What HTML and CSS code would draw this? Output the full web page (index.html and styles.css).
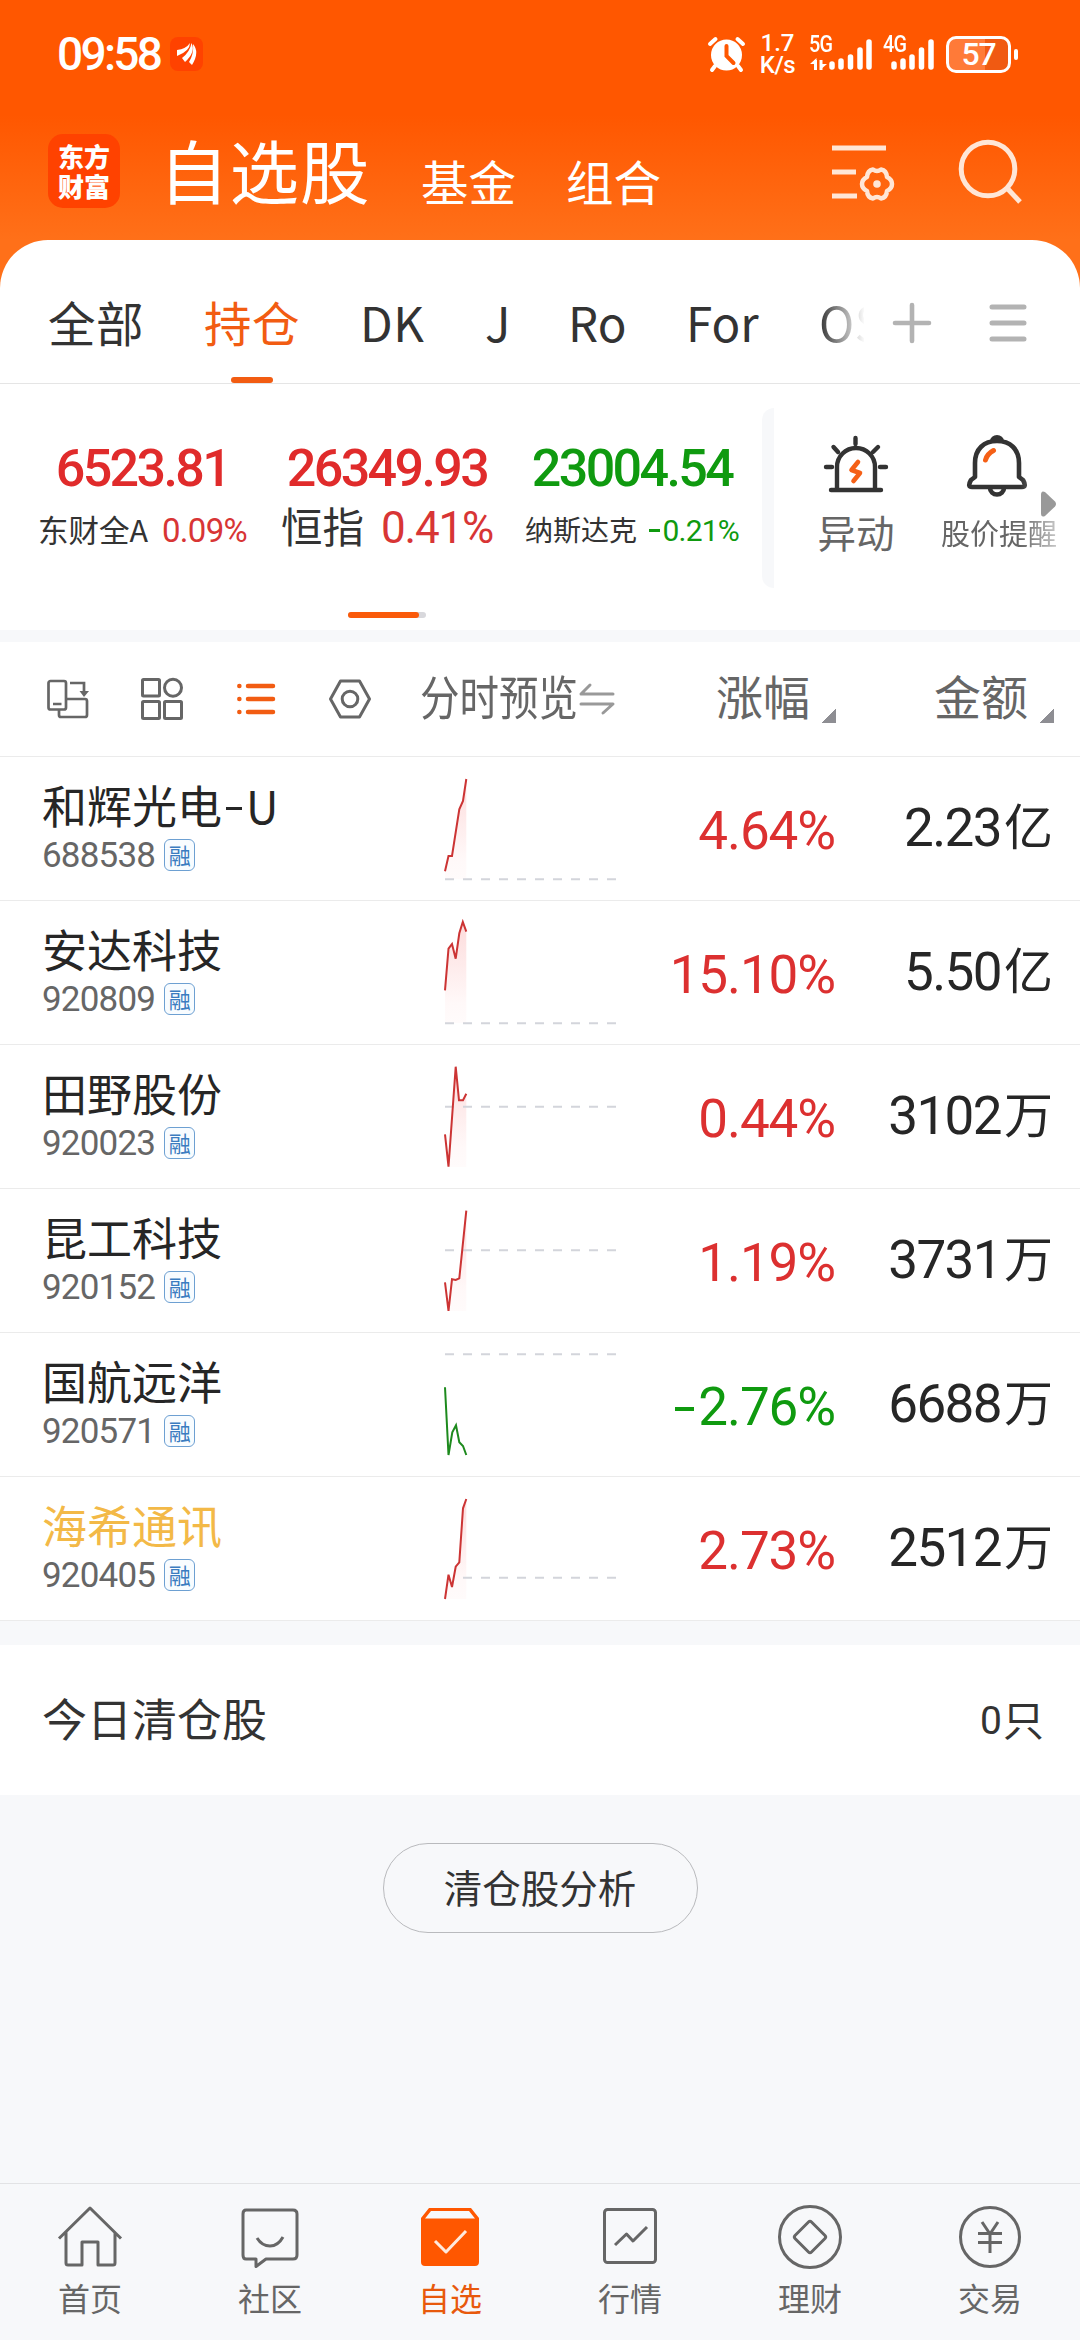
FILE: index.html
```html
<!DOCTYPE html>
<html lang="zh-CN">
<head>
<meta charset="utf-8">
<title>自选股</title>
<link rel="stylesheet" href="styles.css">
</head>
<body>
<div class="app">
  <header class="top">
    <div class="status">
      <span class="time">09:58</span>
      <svg class="notice" width="33" height="34" viewBox="0 0 33 34"><rect width="33" height="34" rx="8" fill="#ff4200"/><g fill="#fff"><path d="M7 13Q16 12 20 6Q20 14 7 19Z"/><path d="M12 21Q20 15 21.500 6Q26 15 15 25Z"/><path d="M19 25Q24 17 23 7Q30 15 22 28Z"/></g></svg>
      <svg class="alarm" width="37" height="37" viewBox="0 0 37 37"><circle cx="18.500" cy="19" r="15.500" fill="#fff"/><path d="M2 8L7.500 3M35 8L29.500 3M7 30L4 34M30 30L33 34" stroke="#fff" stroke-width="4" stroke-linecap="round"/><path d="M18.500 10V20L25.500 27" fill="none" stroke="#ff5700" stroke-width="4" stroke-linecap="round"/></svg>
      <div class="speed"><span>1.7</span><span>K/s</span></div>
      <div class="signal sig5"><span>5G</span>
        <svg width="65" height="36" viewBox="0 0 65 36"><path d="M22 31V28M31 31V25M40.500 31V21M50 31V14M59 31V6" stroke="#fff" stroke-width="5.500" stroke-linecap="round"/><path d="M5.500 34V24M11 24V34" stroke="#fff" stroke-width="3"/><path d="M0 28L6.500 22V28ZM10 34L17 28H10Z" fill="#fff"/></svg>
      </div>
      <div class="signal sig4"><span>4G</span>
        <svg width="52" height="36" viewBox="0 0 52 36"><path d="M10 31V28M19 31V25M28 31V21M37.500 31V14M47 31V6" stroke="#fff" stroke-width="5.500" stroke-linecap="round"/></svg>
      </div>
      <div class="battery"><span>57</span></div>
      <i class="nub"></i>
    </div>
    <div class="titlebar">
      <div class="logo"><span>东方</span><span>财富</span></div>
      <h1>自选股</h1>
      <span class="subtitle">基金</span>
      <span class="subtitle">组合</span>
      <svg class="listset" width="64" height="60" viewBox="0 0 64 60" fill="none" stroke="#ffe6d6"><path d="M0 5H54M0 29H24M0 53H25" stroke-width="5"/><path d="M41 26.500Q45 29.500 49 26.500Q54.500 27.500 55 34Q60 36.500 60 41Q60 45.500 55 48Q54.500 54.500 49 55.500Q45 52.500 41 55.500Q35.500 54.500 35 48Q30 45.500 30 41Q30 36.500 35 34Q35.500 27.500 41 26.500Z" stroke-width="4.500" stroke-linejoin="round"/><circle cx="45" cy="41" r="3.800" fill="#ffe6d6" stroke="none"/></svg>
      <svg class="search" width="64" height="66" viewBox="0 0 64 66" fill="none" stroke="#ffe6d6" stroke-width="5"><circle cx="29" cy="30" r="26.800"/><path d="M48 49L61 63"/></svg>
    </div>
  </header>

  <main class="sheet">
    <nav class="tabs">
      <span class="tab">全部</span>
      <span class="tab active">持仓</span>
      <span class="tab dk">DK</span>
      <span class="tab j">J</span>
      <span class="tab ro">Ro</span>
      <span class="tab for">For</span>
      <span class="tab faded">OS</span>
      <svg class="plus" width="40" height="42" viewBox="0 0 40 42"><path d="M3 21H37M20 3V39" stroke="#b3b3b3" stroke-width="4.600" stroke-linecap="round"/></svg>
      <svg class="menu" width="38" height="42" viewBox="0 0 38 42"><path d="M3 5H35M3 21H35M3 37H35" stroke="#b3b3b3" stroke-width="5" stroke-linecap="round"/></svg>
    </nav>

    <section class="indices">
      <div class="index i1"><b>6523.81</b><div class="sub"><span class="n">东财全A</span><span class="p">0.09%</span></div></div>
      <div class="index i2"><b>26349.93</b><div class="sub"><span class="n">恒指</span><span class="p">0.41%</span></div></div>
      <div class="index i3 down"><b>23004.54</b><div class="sub"><span class="n">纳斯达克</span><span class="p"><i class="minus"></i>0.21%</span></div></div>
      <i class="edge"></i>
      <div class="tool t1">
        <svg width="64" height="58" viewBox="0 0 64 58" fill="none" stroke="#333" stroke-width="4.400" stroke-linecap="round"><path d="M7 55H57M13 54V32A19 19 0 0 1 51 32V54M31.500 3V9M9.500 12L14 17M54 12L49 17M2 32H8M56 32H62"/><path d="M34 27L27.500 35L36 38L29.500 46" stroke="#f56016" stroke-width="4.600" stroke-linejoin="round"/></svg>
        <span>异动</span>
      </div>
      <div class="tool t2">
        <svg width="60" height="62" viewBox="0 0 60 62" fill="none" stroke="#333" stroke-width="4.600" stroke-linecap="round" stroke-linejoin="round"><path d="M8 42V28C8 14 17 6 30 6C43 6 52 14 52 28V42L56 45Q60 52 55 52H5Q0 52 4 45Z"/><path d="M24 6A6 5 0 0 1 36 6Z" fill="#333" stroke-width="2"/><path d="M23 53A7 6.500 0 0 0 37 53"/><path d="M18.500 25Q20 19 26.500 15.500" stroke="#f56016" stroke-width="5"/></svg>
        <span>股价提醒</span>
      </div>
      <svg class="more" width="15" height="26" viewBox="0 0 15 26"><path d="M0 4Q0-1 4 1L14 10.500Q16 13 14 15.500L4 25Q0 27 0 22Z" fill="#999"/></svg>
      <div class="pager"><i></i></div>
    </section>

    <div class="thead">
      <svg class="h1i" width="42" height="40" viewBox="0 0 42 40" fill="none" stroke="#666" stroke-width="2.700"><rect x="1.500" y="2" width="17.500" height="28.500" rx="2"/><path d="M6 25H14.500M23 4H37V15M19 20H38Q40 20 40 22V36Q40 38 38 38H14Q12 38 12 36V31"/><path d="M32.500 12H42L37 18Z" fill="#666" stroke="none"/></svg>
      <svg class="h2i" width="42" height="42" viewBox="0 0 42 42" fill="none" stroke="#666" stroke-width="3"><rect x="1.500" y="1.500" width="17" height="16.500" rx="1"/><ellipse cx="32" cy="9.800" rx="8.500" ry="8.500"/><rect x="1.500" y="23.500" width="17" height="17" rx="1"/><rect x="23.500" y="23.500" width="17" height="17" rx="1"/></svg>
      <svg class="h3i" width="38" height="32" viewBox="0 0 38 32" stroke="#f25c12" stroke-width="4.500" stroke-linecap="round"><path d="M11 3H36M11 16H36M11 29H36M2.300 3H2.400M2.300 16H2.400M2.300 29H2.400"/></svg>
      <svg class="h4i" width="42" height="40" viewBox="0 0 42 40" fill="none" stroke="#666" stroke-width="3" stroke-linejoin="round"><path d="M11.500 2H30.500L40.500 20L30.500 38H11.500L1.500 20Z"/><circle cx="21" cy="20" r="7.800"/></svg>
      <span class="preview">分时预览</span>
      <svg class="swap" width="36" height="32" viewBox="0 0 36 32" fill="none" stroke="#999" stroke-width="3" stroke-linecap="round" stroke-linejoin="round"><path d="M34 11H2L11 2M2 21H34L24 30"/></svg>
      <span class="col c1">涨幅<i></i></span>
      <span class="col c2">金额<i></i></span>
    </div>

    <div class="rows">
      <div class="row">
        <div class="stock"><span class="name">和辉光电<em></em>U</span><div class="code">688538<span class="tag">融</span></div></div>
        <svg class="chart" width="175" height="143" viewBox="0 0 175 143"><defs><linearGradient id="fade" x1="0" y1="20" x2="0" y2="122" gradientUnits="userSpaceOnUse"><stop offset="0" stop-color="#fcd2d2"/><stop offset=".8" stop-color="#fff7f7"/><stop offset="1" stop-color="#fffafa"/></linearGradient></defs><path class="area" d="M0 114.300L3.500 99H7L14.300 52.300L18 44L21.300 22V122H0Z"/><path class="base" d="M0 122.300H172"/><path class="line" d="M0 114.300L3.500 99H7L14.300 52.300L18 44L21.300 22"/></svg>
        <span class="pct">4.64%</span><span class="amt">2.23<em>亿</em></span>
      </div>
      <div class="row">
        <div class="stock"><span class="name">安达科技</span><div class="code">920809<span class="tag">融</span></div></div>
        <svg class="chart" width="175" height="143" viewBox="0 0 175 143"><path class="area" d="M0 89.300L3.500 47.700L7 43L10.700 57.700L14.300 32.300L17.800 21L21.300 30.700V122H0Z"/><path class="base" d="M0 122.300H172"/><path class="line" d="M0 89.300L3.500 47.700L7 43L10.700 57.700L14.300 32.300L17.800 21L21.300 30.700"/></svg>
        <span class="pct">15.10%</span><span class="amt">5.50<em>亿</em></span>
      </div>
      <div class="row">
        <div class="stock"><span class="name">田野股份</span><div class="code">920023<span class="tag">融</span></div></div>
        <svg class="chart" width="175" height="143" viewBox="0 0 175 143"><path class="area" d="M0 89.300L3.500 121.700L10.700 21.700L14 55.300H18L21.300 48.700V122H3Z"/><path class="base" d="M0 61.700H172"/><path class="line" d="M0 89.300L3.500 121.700L10.700 21.700L14 55.300H18L21.300 48.700"/></svg>
        <span class="pct">0.44%</span><span class="amt">3102<em>万</em></span>
      </div>
      <div class="row">
        <div class="stock"><span class="name">昆工科技</span><div class="code">920152<span class="tag">融</span></div></div>
        <svg class="chart" width="175" height="143" viewBox="0 0 175 143"><path class="area" d="M0 93.300L3.500 122L7 90.300L10.700 91L14.300 89.300L21.300 21.700V122H3Z"/><path class="base" d="M0 61.300H172"/><path class="line" d="M0 93.300L3.500 122L7 90.300L10.700 91L14.300 89.300L21.300 21.700"/></svg>
        <span class="pct">1.19%</span><span class="amt">3731<em>万</em></span>
      </div>
      <div class="row down">
        <div class="stock"><span class="name">国航远洋</span><div class="code">920571<span class="tag">融</span></div></div>
        <svg class="chart" width="175" height="143" viewBox="0 0 175 143"><path class="base" d="M0 21.300H172"/><path class="line" d="M0 54.300L3.500 122L7.300 99.300L11 92.300L14.300 109.300L18 113L21.300 122"/></svg>
        <span class="pct"><i class="minus"></i>2.76%</span><span class="amt">6688<em>万</em></span>
      </div>
      <div class="row marked">
        <div class="stock"><span class="name">海希通讯</span><div class="code">920405<span class="tag">融</span></div></div>
        <svg class="chart" width="175" height="143" viewBox="0 0 175 143"><path class="area" d="M0 122L3.500 97.700L7 110L10.700 89.700L14.300 85.300L18 31.300L21.300 22V122Z"/><path class="base" d="M18 100.700H172"/><path class="line" d="M0 122L3.500 97.700L7 110L10.700 89.700L14.300 85.300L18 31.300L21.300 22"/></svg>
        <span class="pct">2.73%</span><span class="amt">2512<em>万</em></span>
      </div>
    </div>

    <div class="cleared"><span>今日清仓股</span><span class="count">0<em>只</em></span></div>
    <div class="rest"><button class="analyse">清仓股分析</button></div>
  </main>

  <footer class="dock">
    <div class="item"><svg width="66" height="66" viewBox="0 0 66 66"><path d="M2 34.500L33 4L64 34.500M9 28V59Q9 61 11 61H25V38H41V61H56Q58 61 58 59V28"/></svg><span>首页</span></div>
    <div class="item"><svg width="66" height="66" viewBox="0 0 66 66"><path d="M9 6H56Q60 6 60 10V51Q60 55 56 55H29L19 62.500V55H9Q6 55 6 51V10Q6 6 9 6Z"/><path d="M20 34Q25 42 33 42Q41 42 46 33"/></svg><span>社区</span></div>
    <div class="item on"><svg width="66" height="66" viewBox="0 0 66 66"><path class="fill" fill-rule="evenodd" d="M12 4H54L62 14V58Q62 62 58 62H8Q4 62 4 58V14ZM14 7L8 14.500H58L52 7Z"/><path class="tick" d="M18 37L29 48L49 27"/></svg><span>自选</span></div>
    <div class="item"><svg width="66" height="66" viewBox="0 0 66 66"><rect x="7.500" y="5.500" width="51" height="53" rx="3"/><path d="M18 41L29.500 30L36 37L50 23"/></svg><span>行情</span></div>
    <div class="item"><svg width="66" height="66" viewBox="0 0 66 66"><circle cx="33" cy="33" r="30.500"/><path d="M31.500 18Q33 16.500 34.500 18L48 31.500Q49.500 33 48 34.500L34.500 48Q33 49.500 31.500 48L18 34.500Q16.500 33 18 31.500Z"/></svg><span>理财</span></div>
    <div class="item"><svg width="66" height="66" viewBox="0 0 66 66"><circle cx="33" cy="33" r="29.500"/><path d="M25 18L33 30L41 18M21 29.500H45M21 38.500H45M33 30V49"/></svg><span>交易</span></div>
  </footer>
</div>
</body>
</html>
```
FILE: styles.css
```css
* { box-sizing: border-box; }
body { margin: 0; font-family: "Noto Sans CJK SC", sans-serif; color: #333; }
i, em { font-style: normal; }
svg { display: block; flex: none; overflow: visible; }
span, b { white-space: nowrap; }

.app { width: 1080px; height: 2340px; display: flex; flex-direction: column; background: #f7f8fa; overflow: hidden; }

/* header */
.top { height: 288px; flex: none; background: linear-gradient(#ff5700 0 115px, #ff7019 240px); color: #fff; }
.status { height: 108px; display: flex; align-items: center; padding: 0 62px 0 57px; font-family: Roboto, sans-serif; font-weight: 500; }
.time { width: 115px; font-size: 46px; letter-spacing: -2.700px; }
.alarm { margin-left: 505px; }
.speed { width: 38px; margin-left: 14px; display: flex; flex-direction: column; align-items: center; font-size: 24px; line-height: 22px; }
.speed span:last-child { letter-spacing: -.5px; }
.signal { position: relative; height: 36px; }
.signal span { position: absolute; left: -1px; top: -3px; font-size: 23px; line-height: 23px; letter-spacing: -1px; transform: scaleX(.86); transform-origin: 0 0; }
.sig5 { width: 65px; margin-left: 14px; }
.sig4 { width: 52px; margin-left: 9px; }
.battery { width: 66px; height: 37px; margin-left: 10px; border: 3px solid #fff; border-radius: 10px; background: linear-gradient(90deg, #ff7a38 36px, #f05a12 36px); display: flex; align-items: center; justify-content: center; font-size: 32px; line-height: 31px; letter-spacing: -1px; }
.nub { width: 4px; height: 11px; margin-left: 3px; border-radius: 2px; background: #fff; }

.titlebar { height: 132px; display: flex; align-items: flex-end; padding: 0 57px 29px 48px; }
.logo { width: 72px; height: 74px; margin-bottom: 3px; border-radius: 15px; background: #ff4200; display: flex; flex-direction: column; align-items: center; justify-content: center; font-size: 26px; line-height: 30px; font-weight: 900; }
.titlebar h1 { margin: 0 0 2px 39px; width: 262px; font-size: 69.500px; line-height: 80px; font-weight: 400; letter-spacing: 1px; height: 80px; white-space: nowrap; }
.subtitle { width: 145px; font-size: 47.500px; line-height: 60px; }
.listset { margin: 0 0 8px 121px; }
.search { margin: 0 0 6px 63px; }

/* white sheet */
.sheet { flex: 1; margin-top: -48px; display: flex; flex-direction: column; min-height: 0; }
.tabs { height: 144px; flex: none; background: #fff; border-radius: 48px 48px 0 0; border-bottom: 1px solid #e5e5e5; display: flex; align-items: center; padding: 22px 0 0 48px; font-size: 47.500px; }
.tab { width: 156px; line-height: 122px; height: 122px; letter-spacing: .5px; margin-top: -1px; }
.tab.active { color: #f25c12; position: relative; }
.tab.active::after { content: ""; position: absolute; left: 27px; bottom: 0; width: 42px; height: 6px; border-radius: 3px; background: #f25c12; }
.tab.dk { width: 125px; letter-spacing: .5px; }
.tab.j { width: 83px; }
.tab.ro { width: 118px; letter-spacing: 0; }
.tab.for { width: 133px; letter-spacing: 0; }
.tab.faded { width: 45px; overflow: hidden; background: linear-gradient(90deg, #333, #fff 46px); -webkit-background-clip: text; background-clip: text; color: transparent; }
.plus { margin-left: 28px; margin-right: 57px; }

/* indices */
.indices { height: 258px; flex: none; background: #fff; border-bottom: 12px solid #f7f8fa; position: relative; display: flex; padding-top: 24px; }
.index { display: flex; flex-direction: column; align-items: center; height: 180px; padding-top: 33px; }
.index b { font-family: Roboto, sans-serif; font-weight: 500; font-size: 52px; line-height: 56px; letter-spacing: -2.600px; color: #e02b2b; }
.i1 { width: 209px; margin-left: 38px; }
.i2 { width: 212px; margin-left: 34px; }
.i3 { width: 214px; margin-left: 32px; }
.sub { display: flex; width: 100%; justify-content: space-between; align-items: baseline; height: 58px; line-height: 58px; margin-top: -1px; }
.i1 .sub, .i3 .sub { padding-top: 4px; }
.p { font-family: Roboto, sans-serif; font-size: 33px; letter-spacing: -.7px; color: #d83535; }
.i1 .n { font-size: 30.500px; }
.i2 .n { font-size: 41.500px; }
.i2 .p { font-size: 44px; letter-spacing: -1.200px; }
.i3 .n { font-size: 28px; }
.i3 .p { font-size: 30px; letter-spacing: -.8px; }
.index.down b, .index.down .p { color: #0f9a0f; }
.minus { display: inline-block; background: currentColor; }
.i3 .minus { width: 11px; height: 3px; margin-right: 3px; vertical-align: 9px; }
.edge { width: 12px; height: 180px; margin-left: 23px; background: #f7f8fa; border-radius: 12px 0 0 12px; }
.tool { display: flex; flex-direction: column; align-items: center; color: #666; padding-top: 27px; }
.t1 { width: 80px; margin-left: 42px; font-size: 38.500px; line-height: 56px; }
.t1 span { margin-top: 10px; }
.t2 { width: 118px; margin-left: 44px; font-size: 29px; line-height: 40px; -webkit-mask-image: linear-gradient(90deg, #000 68%, rgba(0,0,0,.35)); mask-image: linear-gradient(90deg, #000 68%, rgba(0,0,0,.35)); }
.t2 svg { margin-left: -4px; }
.t2 span { margin-top: 15px; }
.more { position: absolute; left: 1041px; top: 107px; }
.pager { position: absolute; left: 348px; top: 228px; width: 78px; height: 6px; border-radius: 3px; background: #d8d8dc; }
.pager i { display: block; width: 71px; height: 6px; border-radius: 3px; background: #fa5a0a; }

/* table */
.thead { height: 115px; flex: none; background: #fff; border-bottom: 1px solid #ebebeb; display: flex; align-items: center; padding: 0 26px 0 47px; color: #666; }
.thead svg { position: relative; }
.h2i { margin-left: 52px; }
.h3i { margin-left: 54px; }
.h4i { margin-left: 54px; }
.preview { width: 159px; margin-left: 49px; font-size: 47px; line-height: 100px; margin-top: -8px; transform: scaleX(.84); transform-origin: 0 50%; }
.col { display: flex; justify-content: flex-end; font-size: 47px; line-height: 100px; margin-top: -8px; }
.col i { width: 15px; height: 15px; margin: 63px 0 0 11px; background: linear-gradient(135deg, transparent 50%, #8e8e93 50%); }
.c1 { width: 222px; }
.c2 { width: 219px; }

.row { height: 144px; background: #fff; border-bottom: 1px solid #ebebeb; display: flex; padding-left: 42px; }
.stock { width: 403px; padding-top: 21px; }
.name { display: flex; align-items: center; font-size: 45px; line-height: 54px; height: 54px; color: #262626; }
.name em { width: 16px; height: 3px; margin: 6px 4px 0 4px; background: #262626; }
.code { display: flex; align-items: center; height: 32px; margin-top: 7px; font-family: Roboto, sans-serif; font-size: 35px; letter-spacing: -.8px; color: #666; }
.tag { width: 31px; height: 32px; margin-left: 9px; border: 1.500px solid #6da0d2; border-radius: 6px; background: #f8fcff; color: #3b7cc0; font: 22px/28px "Noto Sans CJK SC", sans-serif; text-align: center; letter-spacing: 0; display: flex; align-items: center; justify-content: center; padding-bottom: 3px; }
.line { fill: none; stroke: #cc3434; stroke-width: 2; }
.base { fill: none; stroke: #d3d5db; stroke-width: 2; stroke-dasharray: 9 9; }
.area { fill: url(#fade); opacity: .8; }
.pct { width: 215px; display: flex; justify-content: flex-end; align-items: center; height: 148px; font-family: Roboto, sans-serif; font-size: 53px; letter-spacing: -1.100px; color: #dc3030; }
.pct .minus { width: 19px; height: 4px; margin: 4px 4px 0 0; }
.amt { width: 218px; display: flex; justify-content: flex-end; align-items: center; height: 142px; font-family: Roboto, sans-serif; font-size: 53px; letter-spacing: -1.600px; color: #262626; }
.amt em { font: 49px/70px "Noto Sans CJK SC", sans-serif; letter-spacing: 0; margin-left: 3px; margin-top: -8px; }
.down .line { stroke: #1d8a1d; }
.down .pct { color: #0f9a0f; }
.marked .name { color: #f3b947; }

.cleared { height: 150px; flex: none; margin-top: 24px; background: #fff; display: flex; align-items: center; justify-content: space-between; padding: 0 36px 5px 42px; font-size: 45px; }
.count { display: flex; align-items: center; font-family: Roboto, sans-serif; font-size: 39px; padding-top: 6px; }
.count em { font: 41px/60px "Noto Sans CJK SC", sans-serif; margin: -6px 0 0 1px; }
.rest { flex: 1; display: flex; justify-content: center; padding-top: 48px; }
.analyse { width: 315px; height: 90px; border: 1px solid #b9babd; border-radius: 45px; background: none; padding: 0 0 4px; font: 38.500px/82px "Noto Sans CJK SC", sans-serif; color: #333; }

/* bottom navigation */
.dock { height: 157px; flex: none; border-top: 1px solid #e2e3e5; display: flex; }
.item { flex: 1; display: flex; flex-direction: column; align-items: center; padding-top: 20px; font-size: 32px; line-height: 44px; color: #666; }
.item span { margin-top: 5px; }
.item svg { fill: none; stroke: #666; stroke-width: 3; stroke-linejoin: round; }
.item.on { color: #e8590c; }
.item.on .fill { fill: #ff5700; stroke: none; }
.item.on .tick { stroke: #ffe9dc; }
```
